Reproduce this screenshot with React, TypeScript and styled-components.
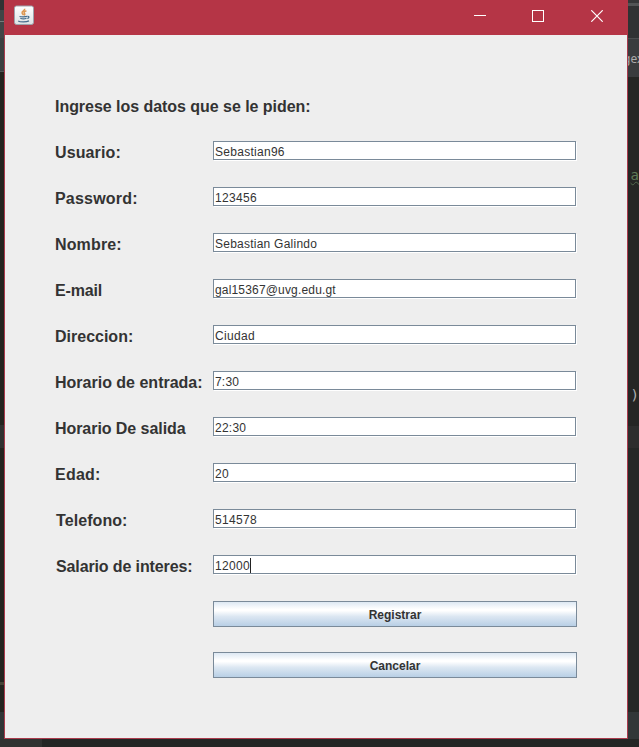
import React from "react";
import styled, { createGlobalStyle } from "styled-components";

const GlobalStyle = createGlobalStyle`
  * { box-sizing: border-box; }
  body { margin: 0; overflow: hidden; background: #242625; }
`;

const Desktop = styled.div`
  width: 639px;
  height: 747px;
  display: grid;
  grid-template: 739px 8px / 4px 624px 11px;
  overflow: hidden;
  font-family: "Liberation Sans", Arial, sans-serif;
`;

const Strip = styled.div`
  display: flex;
  flex-direction: column;
  overflow: hidden;
`;

const BottomStrip = styled.div`
  grid-column: 1 / -1;
  display: flex;
`;

const Band = styled.div<{ $h: number; $bg: string; $line?: string }>`
  height: ${(p) => p.$h}px;
  flex: none;
  background: ${(p) => p.$bg};
  border-bottom: ${(p) => (p.$line ? `1px solid ${p.$line}` : "0")};
`;

const Segment = styled.div<{ $w: number; $bg: string }>`
  width: ${(p) => p.$w}px;
  background: ${(p) => p.$bg};
`;

const CodeBand = styled(Band)<{ $color: string; $wavy?: boolean }>`
  display: flex;
  align-items: center;
  justify-content: flex-end;
  white-space: nowrap;
  font: 14px "DejaVu Sans Mono", monospace;
  color: ${(p) => p.$color};
  text-decoration: ${(p) => (p.$wavy ? "underline wavy #52684c 1px" : "none")};
`;

const UiBand = styled(Band)`
  display: flex;
  align-items: center;
  font: 12px "Noto Sans", sans-serif;
  color: #adadad;
  text-indent: -5px;
`;

const Window = styled.main`
  display: flex;
  flex-direction: column;
  background: #eeeeee;
  border: 1px solid #a93a4c;
  border-top: 0;
`;

const TitleBar = styled.header`
  height: 35px;
  margin: 0 -1px;
  flex: none;
  display: flex;
  justify-content: space-between;
  background: #b53546;
`;

const AppIcon = styled.svg`
  width: 20px;
  height: 20px;
  margin: 5px 0 0 10px;
`;

const Controls = styled.div`
  display: flex;
  margin-right: 1px;
`;

const Control = styled.button`
  width: 58px;
  height: 32px;
  padding: 0;
  border: 0;
  background: none;
  display: flex;
  align-items: center;
  justify-content: center;
  &:last-child { width: 60px; }
`;

const Form = styled.form`
  display: flex;
  flex-direction: column;
  padding: 60px 50px 0;
`;

const Heading = styled.h1`
  margin: 0;
  height: 46px;
  font-size: 16px;
  line-height: 23px;
  letter-spacing: -0.04px;
  color: #333333;
  white-space: nowrap;
`;

const Row = styled.div`
  display: grid;
  grid-template-columns: 158px 364px;
  height: 46px;
  align-items: start;
`;

const Label = styled.label<{ $shift?: number; $track: number }>`
  padding-left: ${(p) => p.$shift ?? 0}px;
  font-size: 16px;
  font-weight: bold;
  line-height: 23px;
  letter-spacing: ${(p) => p.$track}px;
  color: #333333;
  white-space: nowrap;
`;

const Field = styled.div`
  width: 363px;
  height: 19px;
  display: flex;
  padding: 2px 0 0 1px;
  border: 1px solid #7a8a99;
  background: #ffffff;
  box-shadow: 1px 1px 0 #ffffff;
  font-size: 12px;
  line-height: 16px;
  color: #333333;
`;

const Value = styled.span<{ $track: number }>`
  letter-spacing: ${(p) => p.$track}px;
  white-space: nowrap;
`;

const Caret = styled.span`
  width: 1px;
  height: 15px;
  background: #222222;
`;

const Actions = styled.div`
  display: grid;
  gap: 25px;
  margin-left: 158px;
`;

const ActionButton = styled.button`
  width: 364px;
  height: 26px;
  padding: 1px 0 0;
  border: 1px solid #7a8a99;
  border-radius: 0;
  background: linear-gradient(#dde8f3 0%, #ffffff 30%, #ffffff 36%, #dce7f2 60%, #b8cfe5 100%);
  font: bold 12px "Liberation Sans", Arial, sans-serif;
  color: #333333;
`;

type FormRow = {
  label: string;
  value: string;
  shift?: number;
  labelTrack: number;
  valueTrack: number;
  focused?: boolean;
};

const rows: FormRow[] = [
  { label: "Usuario:", value: "Sebastian96", labelTrack: 0.12, valueTrack: 0.28 },
  { label: "Password:", value: "123456", labelTrack: 0.2, valueTrack: 0.33 },
  { label: "Nombre:", value: "Sebastian Galindo", labelTrack: 0.14, valueTrack: 0.24 },
  { label: "E-mail", value: "gal15367@uvg.edu.gt", labelTrack: -0.15, valueTrack: 0.17 },
  { label: "Direccion:", value: "Ciudad", labelTrack: 0, valueTrack: 0.35 },
  { label: "Horario de entrada:", value: "7:30", labelTrack: 0, valueTrack: 0.2 },
  { label: "Horario De salida", value: "22:30", labelTrack: -0.06, valueTrack: 0.25 },
  { label: "Edad:", value: "20", labelTrack: 0.25, valueTrack: 0.33 },
  { label: "Telefono:", value: "514578", shift: 1, labelTrack: 0.08, valueTrack: 0.33 },
  { label: "Salario de interes:", value: "12000", shift: 1, labelTrack: -0.12, valueTrack: 0.33, focused: true },
];

function JavaIcon() {
  return (
    <AppIcon viewBox="0 0 20 20" fill="none" aria-hidden="true">
      <defs>
        <linearGradient id="tile" x1="0" y1="0" x2="0" y2="1">
          <stop offset="0" stopColor="#ffffff" />
          <stop offset="1" stopColor="#dce2e4" />
        </linearGradient>
      </defs>
      <rect x="0.5" y="1" width="19" height="18.5" rx="2" fill="url(#tile)" stroke="#9da4ad" />
      <path d="M10.6 3.8C11.4 5.5 7.3 6.2 8.1 8.1C8.4 9 9.5 9.6 9.5 10.3M12.4 5.7C9.6 6.8 9.7 7.8 10.6 8.6C11.1 9.2 10.8 9.8 10.2 10.4" stroke="#dc9650" strokeWidth="1.5" />
      <path d="M5.5 11.5C7 12 11.5 12 13 11.4M6.3 13.3C8 13.9 11 13.9 12.5 13.2M4.2 15.9C6 17.2 12.5 17.2 15 15.9M13.4 11.4C15.6 11 15.3 12.9 13.3 13.5" stroke="#466c8c" strokeWidth="1.2" />
    </AppIcon>
  );
}

export default function App() {
  return (
    <>
      <GlobalStyle />
      <Desktop>
        <Strip>
          <Band $h={10} $bg="#303233" />
          <Band $h={12} $bg="#414546" $line="#777b7c" />
          <Band $h={16} $bg="#414546" />
          <Band $h={34} $bg="#3b3f40" $line="#515556" />
          <Band $h={353} $bg="#24241f" />
          <Band $h={23} $bg="#303130" />
          <Band $h={234} $bg="#24241f" />
          <Band $h={3} $bg="#454336" />
          <Band $h={27} $bg="#24241f" />
          <Band $h={27} $bg="#303536" />
        </Strip>
        <Window>
          <TitleBar>
            <JavaIcon />
            <Controls>
              <Control type="button" aria-label="Minimize">
                <svg width="12" height="12"><path d="M0 5.5H12" stroke="#fff" /></svg>
              </Control>
              <Control type="button" aria-label="Maximize">
                <svg width="12" height="12"><rect x=".5" y=".5" width="11" height="11" fill="none" stroke="#fff" /></svg>
              </Control>
              <Control type="button" aria-label="Close">
                <svg width="12" height="12"><path d="M.3.3L11.7 11.7M11.7.3L.3 11.7" stroke="#fff" strokeWidth="1.2" /></svg>
              </Control>
            </Controls>
          </TitleBar>
          <Form>
            <Heading>Ingrese los datos que se le piden:</Heading>
            {rows.map((r) => (
              <Row key={r.label}>
                <Label $shift={r.shift} $track={r.labelTrack}>{r.label}</Label>
                <Field>
                  <Value $track={r.valueTrack}>{r.value}</Value>
                  {r.focused && <Caret />}
                </Field>
              </Row>
            ))}
            <Actions>
              <ActionButton type="button">Registrar</ActionButton>
              <ActionButton type="button">Cancelar</ActionButton>
            </Actions>
          </Form>
        </Window>
        <Strip>
          <Band $h={3} $bg="#353738" />
          <Band $h={3} $bg="#525556" />
          <Band $h={33} $bg="#303233" $line="#4b4e4f" />
          <UiBand $h={38} $bg="#3a3c3e">gex</UiBand>
          <Band $h={87} $bg="#252624" />
          <CodeBand $h={22} $bg="#252624" $color="#5f7b58" $wavy>a</CodeBand>
          <Band $h={198} $bg="#252624" />
          <CodeBand $h={22} $bg="#252624" $color="#b0b0b0">)</CodeBand>
          <Band $h={20} $bg="#252624" />
          <Band $h={22} $bg="#2d2e2d" />
          <Band $h={264} $bg="#252826" />
          <Band $h={27} $bg="#323738" />
        </Strip>
        <BottomStrip>
          <Segment $w={42} $bg="#303231" />
          <Segment $w={597} $bg="#242625" />
        </BottomStrip>
      </Desktop>
    </>
  );
}
